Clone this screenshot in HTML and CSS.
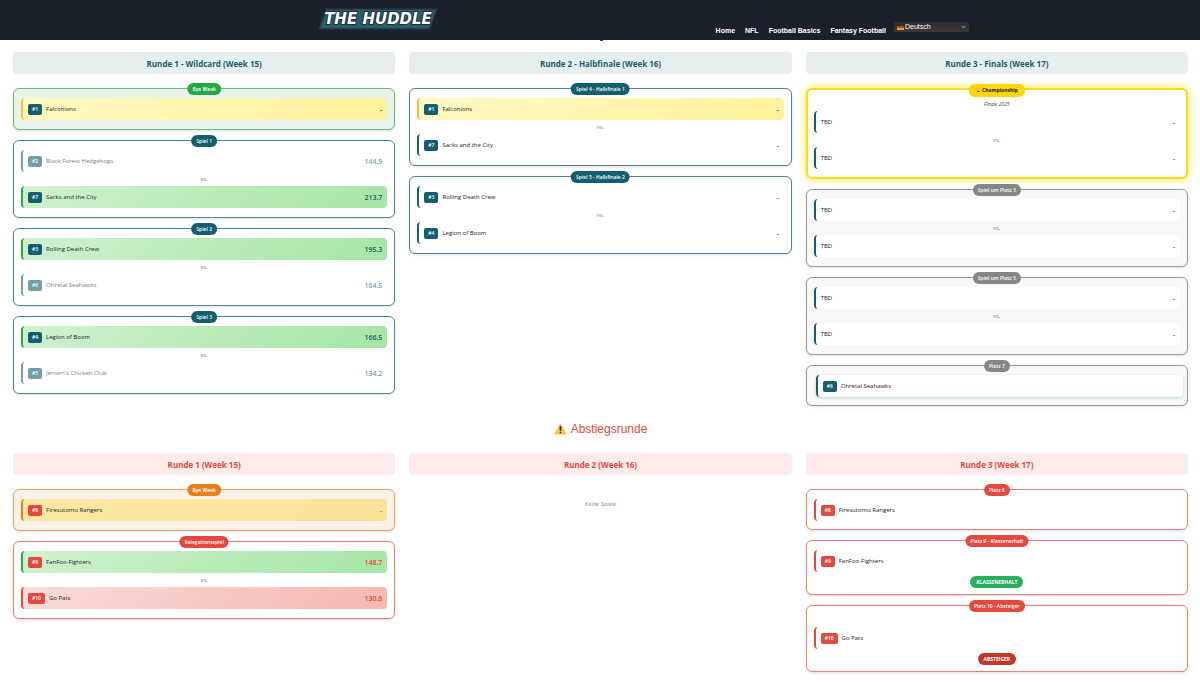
FILE: index.html
```html
<!DOCTYPE html>
<html lang="de">
<head>
  <meta charset="UTF-8">
  <meta name="viewport" content="width=device-width, initial-scale=1.0">
  <title>The Huddle - Playoffs</title>
  <link rel="stylesheet" href="styles.css">
</head>
<body>
  <header class="site-header">
    <div class="header-inner">
      <a class="logo" href="#" aria-label="The Huddle">
        <svg width="120" height="22" viewBox="0 0 120 22">
          <polygon points="8,0.5 119.5,0.5 112,21.5 0.5,21.5" fill="#303c44"/>
          <polygon points="9,2 117.5,2 111,20 2.5,20" fill="#245f6c"/>
          <text x="60" y="16" text-anchor="middle" class="logo-text">THE HUDDLE</text>
        </svg>
      </a>
      <div class="header-right">
        <nav class="nav">
          <a href="#">Home</a>
          <a href="#">NFL</a>
          <a href="#">Football Basics</a>
          <a href="#">Fantasy Football</a>
        </nav>
        <div class="lang">
          <svg class="flag" width="7" height="5" viewBox="0 0 7 5">
            <rect width="7" height="2" fill="#3a2a28"/>
            <rect y="1" width="7" height="2" fill="#b8402a"/>
            <rect y="3" width="7" height="2" fill="#f0a01e"/>
          </svg>
          <select class="lang-select" aria-label="Sprache">
            <option>Deutsch</option>
          </select>
          <svg class="chevron" width="5" height="4" viewBox="0 0 5 4">
            <path d="M0.7 1 L2.5 2.8 L4.3 1" fill="none" stroke="#ddd" stroke-width="0.8"/>
          </svg>
        </div>
      </div>
    </div>
  </header>

  <main class="main">
    <section class="bracket">
      <div class="round">
        <h3 class="round-title">Runde 1 - Wildcard (Week 15)</h3>
        <div class="match bye">
          <span class="label">Bye Week</span>
          <div class="team gold"><span class="seed">#1</span><span class="name">Falconions</span><span class="score">-</span></div>
        </div>
        <div class="match">
          <span class="label">Spiel 1</span>
          <div class="team out"><span class="seed">#2</span><span class="name">Black Forest Hedgehogs</span><span class="score">144.9</span></div>
          <div class="vs">vs.</div>
          <div class="team winner"><span class="seed">#7</span><span class="name">Sacks and the City</span><span class="score">213.7</span></div>
        </div>
        <div class="match">
          <span class="label">Spiel 2</span>
          <div class="team winner"><span class="seed">#3</span><span class="name">Rolling Death Crew</span><span class="score">195.3</span></div>
          <div class="vs">vs.</div>
          <div class="team out"><span class="seed">#6</span><span class="name">Ohretal Seahawks</span><span class="score">164.5</span></div>
        </div>
        <div class="match">
          <span class="label">Spiel 3</span>
          <div class="team winner"><span class="seed">#4</span><span class="name">Legion of Boom</span><span class="score">166.5</span></div>
          <div class="vs">vs.</div>
          <div class="team out"><span class="seed">#5</span><span class="name">Jensen's Chicken Club</span><span class="score">134.2</span></div>
        </div>
      </div>

      <div class="round">
        <h3 class="round-title">Runde 2 - Halbfinale (Week 16)</h3>
        <div class="match">
          <span class="label">Spiel 4 - Halbfinale 1</span>
          <div class="team gold"><span class="seed">#1</span><span class="name">Falconions</span><span class="score">-</span></div>
          <div class="vs">vs.</div>
          <div class="team"><span class="seed">#7</span><span class="name">Sacks and the City</span><span class="score">-</span></div>
        </div>
        <div class="match">
          <span class="label">Spiel 5 - Halbfinale 2</span>
          <div class="team"><span class="seed">#3</span><span class="name">Rolling Death Crew</span><span class="score">-</span></div>
          <div class="vs">vs.</div>
          <div class="team"><span class="seed">#4</span><span class="name">Legion of Boom</span><span class="score">-</span></div>
        </div>
      </div>

      <div class="round">
        <h3 class="round-title">Runde 3 - Finals (Week 17)</h3>
        <div class="match championship">
          <span class="label">
            <svg width="5" height="5" viewBox="0 0 5 5">
              <path d="M1 0.3 H4 V1.6 Q4 3 2.5 3 Q1 3 1 1.6 Z" fill="#f7b24a"/>
              <path d="M2.5 3 V4.2" stroke="#c98a1c" stroke-width="0.6"/>
              <rect x="1.3" y="4" width="2.4" height="1" fill="#7a5a22"/>
            </svg>
            Championship
          </span>
          <div class="subtitle">Finale 2025</div>
          <div class="team"><span class="name">TBD</span><span class="score">-</span></div>
          <div class="vs">vs.</div>
          <div class="team"><span class="name">TBD</span><span class="score">-</span></div>
        </div>
        <div class="match placement">
          <span class="label">Spiel um Platz 3</span>
          <div class="team"><span class="name">TBD</span><span class="score">-</span></div>
          <div class="vs">vs.</div>
          <div class="team"><span class="name">TBD</span><span class="score">-</span></div>
        </div>
        <div class="match placement">
          <span class="label">Spiel um Platz 5</span>
          <div class="team"><span class="name">TBD</span><span class="score">-</span></div>
          <div class="vs">vs.</div>
          <div class="team"><span class="name">TBD</span><span class="score">-</span></div>
        </div>
        <div class="match placement single hovered">
          <span class="label">Platz 7</span>
          <div class="team"><span class="seed">#6</span><span class="name">Ohretal Seahawks</span></div>
        </div>
      </div>
    </section>

    <h2 class="section-title">
      <svg width="13" height="12" viewBox="0 0 13 12">
        <path d="M6.5 0.8 L12.3 11 H0.7 Z" fill="#fcc64b" stroke="#fcc64b" stroke-width="1" stroke-linejoin="round"/>
        <path d="M5.7 3.4 H7.3 L7 7.8 H6 Z" fill="#2f2f2f" stroke="#2f2f2f" stroke-width="0.4"/>
        <circle cx="6.5" cy="9.6" r="0.9" fill="#2f2f2f"/>
      </svg>
      Abstiegsrunde
    </h2>

    <section class="bracket relegation">
      <div class="round">
        <h3 class="round-title">Runde 1 (Week 15)</h3>
        <div class="match bye">
          <span class="label">Bye Week</span>
          <div class="team gold"><span class="seed">#8</span><span class="name">Firesutomu Rangers</span><span class="score">-</span></div>
        </div>
        <div class="match">
          <span class="label">Relegationsspiel</span>
          <div class="team winner"><span class="seed">#9</span><span class="name">FanFoo-Fighters</span><span class="score">148.7</span></div>
          <div class="vs">vs.</div>
          <div class="team loser"><span class="seed">#10</span><span class="name">Go Pats</span><span class="score">130.6</span></div>
        </div>
      </div>

      <div class="round">
        <h3 class="round-title">Runde 2 (Week 16)</h3>
        <p class="empty">Keine Spiele</p>
      </div>

      <div class="round">
        <h3 class="round-title">Runde 3 (Week 17)</h3>
        <div class="match single">
          <span class="label">Platz 8</span>
          <div class="team"><span class="seed">#8</span><span class="name">Firesutomu Rangers</span></div>
        </div>
        <div class="match result">
          <span class="label">Platz 9 - Klassenerhalt</span>
          <div class="team"><span class="seed">#9</span><span class="name">FanFoo-Fighters</span></div>
          <span class="status safe">KLASSENERHALT</span>
        </div>
        <div class="match result">
          <span class="label">Platz 10 - Absteiger</span>
          <div class="subtitle"></div>
          <div class="team"><span class="seed">#10</span><span class="name">Go Pats</span></div>
          <span class="status down">ABSTEIGER</span>
        </div>
      </div>
    </section>
  </main>
</body>
</html>
```
FILE: styles.css
```css
:root {
  --main: #145f6f;
  --line: #4f8794;
  --tint: #e7eeef;
}

* {
  box-sizing: border-box;
}

body {
  margin: 0;
  background: #fff;
  color: #1c1c1c;
  font-family: "Open Sans", "Noto Sans", sans-serif;
  font-size: 6px;
}

/* Header */
.site-header {
  position: relative;
  height: 40px;
  background: #1b212c;
}
/* little pointer under the header bar */
.site-header::after {
  content: "";
  position: absolute;
  top: 100%;
  left: 50%;
  width: 3px;
  height: 1px;
  background: #444a54;
}
.header-inner {
  display: flex;
  justify-content: space-between;
  max-width: 764px;
  margin: 0 auto;
  padding: 8px 13px 0 100px;
}
.logo {
  height: 22px;
}
.logo-text {
  font-family: "DejaVu Sans", sans-serif;
  font-size: 15px;
  font-weight: bold;
  font-style: italic;
  fill: #fff;
  stroke: #222b35;
  stroke-width: 2px;
  paint-order: stroke;
}
.header-right {
  display: flex;
  gap: 8px;
  padding-top: 14px;
}
.nav {
  display: flex;
  gap: 10px;
  padding-top: 4px;
  font-family: "Liberation Sans", Arial, sans-serif;
  font-size: 7px;
  font-weight: bold;
  line-height: 10px;
}
.nav a {
  color: #fff;
  text-decoration: none;
}
.lang {
  position: relative;
  width: 75px;
  height: 10px;
}
.lang-select {
  display: block;
  width: 100%;
  height: 10px;
  padding: 0 0 0 11px;
  border: 0;
  appearance: none;
  background: linear-gradient(#2b2b2b, #3a3a3a);
  color: #fff;
  font-family: "Liberation Sans", Arial, sans-serif;
  font-size: 7px;
  line-height: 10px;
}
.flag {
  position: absolute;
  top: 3px;
  left: 3px;
}
.chevron {
  position: absolute;
  top: 3px;
  right: 3px;
}

/* Bracket */
.main {
  padding: 12px 12px 10px 13px;
}
.bracket {
  display: grid;
  grid-template-columns: repeat(3, 1fr);
  gap: 14px;
}
.round {
  display: flex;
  flex-direction: column;
  gap: 10px;
}
.round-title {
  margin: 0 0 4px;
  padding: 6px 5px 4px;
  border-radius: 4px;
  background: var(--tint);
  color: var(--main);
  font-size: 8px;
  font-weight: 700;
  line-height: 12px;
  text-align: center;
}
.match {
  position: relative;
  padding: 9px 7px;
  border: 1px solid var(--line);
  border-radius: 6px;
  background: #fff;
  box-shadow: 0 1px 3px rgba(0, 0, 0, 0.12);
}
.label {
  position: absolute;
  top: -6px;
  left: 50%;
  transform: translateX(-50%);
  padding: 0 5px;
  border-radius: 6px;
  background: var(--main);
  color: #fff;
  font-size: 5px;
  font-weight: 600;
  line-height: 12px;
  white-space: nowrap;
}
.team {
  display: flex;
  align-items: center;
  height: 22px;
  padding: 0 5px;
  border-left: 2px solid var(--main);
  border-radius: 4px;
  background: #fff;
}
.seed {
  margin-right: 4px;
  padding: 0 4px;
  border-radius: 2px;
  background: var(--main);
  color: #fff;
  font-size: 5px;
  font-weight: 600;
  line-height: 11px;
}
.name {
  flex: 1;
  font-weight: 500;
}
.score {
  color: var(--main);
  font-size: 7px;
  font-weight: 600;
}
.vs {
  color: #888;
  font-size: 6px;
  line-height: 14px;
  text-align: center;
}
.subtitle {
  height: 12px;
  color: #444;
  font-size: 5px;
  font-style: italic;
  line-height: 10px;
  text-align: center;
}

.team.out {
  opacity: 0.6;
}
.team.winner {
  border-color: #28a745;
  background: linear-gradient(135deg, #d0f1d0, #a5e6a5);
}
.team.loser {
  border-color: #e04a3c;
  background: linear-gradient(135deg, #fadbd8, #f5b7b1);
}
.team.gold {
  border-color: #fbc02d;
  background: linear-gradient(135deg, #fff9c4, #fff29a);
}

.match.bye {
  border-color: #6bbd7c;
  background: #e8f4ea;
}
.bye .label {
  background: #28a745;
}
.single {
  padding-bottom: 8px;
}

.championship {
  padding: 9px 6px 8px;
  border: 2px solid #ffd91a;
  box-shadow: 0 0 8px rgba(255, 225, 0, 0.8);
}
.championship .label {
  padding: 0 7px;
  background: #ffd60a;
  color: #222;
  font-weight: 700;
  line-height: 13px;
}

.placement {
  border-color: #999;
  background: #f8f8f8;
}
.placement .label {
  background: #868686;
}
.hovered .team {
  margin: 0 -3px 0 2px;
  box-shadow: 0 1px 3px rgba(20, 95, 111, 0.25);
}

/* Relegation */
.section-title {
  display: flex;
  justify-content: center;
  align-items: center;
  gap: 4px;
  margin: 15px 0 16px;
  color: #e74c3c;
  font-family: "Liberation Sans", Arial, sans-serif;
  font-size: 12px;
  font-weight: normal;
  line-height: 16px;
}
.relegation {
  --main: #e5483d;
  --line: #e88279;
  --tint: #fdecea;
}
.relegation .match.bye {
  border-color: #e8a268;
  background: #fcf1e7;
}
.relegation .bye .label {
  background: #e67e22;
}
.relegation .gold {
  border-color: #e67e22;
  background: linear-gradient(135deg, #fbe8a4, #f9e498);
}
.result {
  padding-bottom: 6px;
}
.status {
  display: block;
  width: fit-content;
  margin: 4px auto 0;
  padding: 0 6px;
  border-radius: 6px;
  color: #fff;
  font-size: 5px;
  font-weight: 700;
  line-height: 12px;
}
.safe {
  background: #27ae60;
}
.down {
  background: #c0392b;
}
.empty {
  margin: 10px 0;
  color: #888;
  font-size: 6px;
  font-style: italic;
  line-height: 10px;
  text-align: center;
}
```
